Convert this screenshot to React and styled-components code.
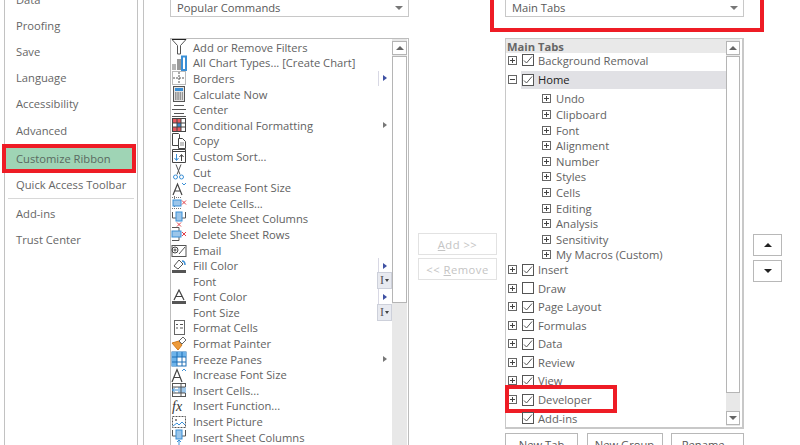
import React from 'react'
import styled, { createGlobalStyle } from 'styled-components'

const Global = createGlobalStyle`
html, body { margin: 0; padding: 0; background: #fff; }
body { font-family: "Open Sans", "Noto Sans", "Liberation Sans", sans-serif; }
`

const Svg = ({ children }) => (
  <svg width="16" height="16" viewBox="0 0 16 16" fill="none" strokeWidth="1">{children}</svg>
)

const G = '#555'
const B = '#3a8fd6'
const R = '#e0404a'

const commandIcons = {
  filter: <Svg><path d="M1 .5h14L9.5 6.5V15h-3V6.500z" stroke={G} /><path d="M1 .5h14" stroke="#222" /></Svg>,
  chart: <Svg><rect x="1" y="9" width="4" height="6" fill="#b5b5b5" /><rect x="6" y="4" width="4" height="11" fill="#9a9a9a" /><rect x="11" y="1.500" width="4" height="13.500" fill="#fff" stroke={B} strokeWidth="2" /></Svg>,
  borders: <Svg><rect x="1.500" y="1.500" width="13" height="13" stroke="#777" strokeDasharray="1 1" /><path d="M8 2v12M2 8h12" stroke="#555" strokeDasharray="2 1" /></Svg>,
  calc: <Svg><rect x="2.500" y=".5" width="11" height="15" fill="#e4e4e4" stroke="#555" /><rect x="4" y="2" width="8" height="3" fill={B} /><path d="M4 7h8M4 9h8M4 11h8M4 13h8" stroke="#444" strokeDasharray="1.500 .8" /></Svg>,
  center: <Svg><path d="M3 3.500h10M1 7.500h14M3 11.500h10M1 14.500h14" stroke="#555" /></Svg>,
  conditional: <Svg><rect x="1.500" y="1.500" width="13" height="13" stroke="#444" /><rect x="2" y="2" width="8" height="4" fill="#e85a60" /><rect x="6" y="6" width="4" height="4" fill={B} /><rect x="2" y="10" width="8" height="4" fill="#e85a60" /><path d="M6 2v12M10 2v12M2 6h12M2 10h12" stroke="#444" /></Svg>,
  copy: <Svg><path d="M1.500.5h6l1 1v11h-7z" fill="#fff" stroke="#444" /><path d="M7.500 5.500h4l3 3v7h-7z" fill="#fff" stroke="#444" /><path d="M9 10h4M9 12h4" stroke="#888" /></Svg>,
  sort: <Svg><path d="M1.500 1.500h13v13h-13zM1.500 3.500h13" stroke="#444" /><path d="M5.500 6v6M3.500 10l2 2.500 2-2.500" stroke={B} /><path d="M10.500 13V7M8.500 9l2-2.500 2 2.500" stroke="#444" /></Svg>,
  cut: <Svg><path d="M5 .5l4 10M10 .5L6 10.500" stroke="#555" /><circle cx="4.500" cy="13" r="2" stroke={B} /><circle cx="10.500" cy="13" r="2" stroke={B} /></Svg>,
  decrease: <Svg><path d="M2 15L6.500 4 11 15M3.800 11h5.400" stroke="#444" strokeWidth="1.200" /><path d="M11 3l2 2 2-2" stroke={B} /></Svg>,
  deleteCells: <Svg><path d="M1 2.500h10M1 13.500h10M3.500 1v14" stroke="#777" strokeDasharray="1 1" /><rect x="2" y="5" width="8" height="6" fill="#9cc6ea" stroke={B} /><path d="M11 5.500l4 4M15 5.500l-4 4" stroke={R} /></Svg>,
  deleteCols: <Svg><path d="M1.500 1v6h13V1M5.500 1v6M10.500 1v6" stroke="#555" /><rect x="5" y="1" width="6" height="9" fill="#9cc6ea" stroke={B} /><path d="M6 11.500l4 4M10 11.500l-4 4" stroke={R} /></Svg>,
  deleteRows: <Svg><path d="M1 1.500h7v13H1M1 5.500h7M1 10.500h7" stroke="#555" /><rect x="1" y="5" width="9" height="6" fill="#9cc6ea" stroke={B} /><path d="M11 6l4 4M15 6l-4 4" stroke={R} /></Svg>,
  email: <Svg><rect x="1" y="3.500" width="14" height="11" fill="#fff" stroke="#555" /><path d="M8 12l6-7" stroke="#555" /><circle cx="4" cy="8" r="3" stroke="#444" /><circle cx="4" cy="8" r="1" stroke="#444" /></Svg>,
  fill: <Svg><path d="M3 8l5-6 4 4-5 5z" fill="#fff" stroke="#555" /><path d="M11 3c2 0 3 2 3 4" stroke={B} strokeWidth="1.500" /><rect x="1" y="12" width="14" height="3" fill="#555" /></Svg>,
  fontColor: <Svg><path d="M3 11L8 1l5 10M5 7.500h6" stroke="#444" strokeWidth="1.200" /><rect x="1" y="12" width="14" height="3" fill="#555" /></Svg>,
  formatCells: <Svg><rect x="3.500" y=".5" width="10" height="14" fill="#fff" stroke="#666" /><path d="M5 4.500h2M9 4.500h3M5 8h2M9 8h3" stroke="#555" /></Svg>,
  painter: <Svg><path d="M1 7l6 7 4-5-3-4z" fill="#ee9b3a" stroke="#d07a1c" /><path d="M8 5l4-4 3 3-4 4z" fill="#fff" stroke="#666" /></Svg>,
  freeze: <Svg><rect x="1" y="1" width="14" height="14" fill="#fff" stroke="#1f6fb5" /><rect x="1" y="1" width="14" height="5" fill="#6db3ea" /><rect x="1" y="1" width="5" height="14" fill="#6db3ea" /><path d="M6 1v14M11 1v14M1 6h14M1 11h14" stroke="#1f6fb5" /></Svg>,
  increase: <Svg><path d="M1 15L6 2.500 11 15M3 10.500h6" stroke="#444" strokeWidth="1.200" /><path d="M11 4l2-2 2 2" stroke={B} /></Svg>,
  insertCells: <Svg><rect x="1.500" y="1.500" width="13" height="13" fill="#fff" stroke="#555" /><rect x="7" y="5" width="8" height="6" fill="#9cc6ea" /><path d="M1 8h6M4 5.500L1.500 8 4 10.500" stroke={B} /><path d="M2 5h12M2 11h12M10 2v12" stroke="#555" /></Svg>,
  fx: <Svg><text x="1" y="13" fontFamily="Liberation Serif" fontStyle="italic" fontSize="14" fill="#333">fx</text></Svg>,
  picture: <Svg><rect x="1.500" y="2.500" width="13" height="11" fill="#fff" stroke="#555" strokeDasharray="2 1" /><circle cx="5" cy="6" r="1" fill="#666" /><path d="M2 12l4-3 2 2 3-3 3 3" stroke={B} /></Svg>,
  insertCols: <Svg><path d="M1.500 1v6h13V1" stroke="#555" /><rect x="5" y="1" width="6" height="9" fill="#9cc6ea" stroke={B} /><path d="M8 11v5M6 13l2-2 2 2" stroke={B} /></Svg>,
}

const commands = [
  ['filter', 'Add or Remove Filters'],
  ['chart', 'All Chart Types... [Create Chart]'],
  ['borders', 'Borders', 'split'],
  ['calc', 'Calculate Now'],
  ['center', 'Center'],
  ['conditional', 'Conditional Formatting', 'sub'],
  ['copy', 'Copy'],
  ['sort', 'Custom Sort...'],
  ['cut', 'Cut'],
  ['decrease', 'Decrease Font Size'],
  ['deleteCells', 'Delete Cells...'],
  ['deleteCols', 'Delete Sheet Columns'],
  ['deleteRows', 'Delete Sheet Rows'],
  ['email', 'Email'],
  ['fill', 'Fill Color', 'split'],
  [null, 'Font', 'combo'],
  ['fontColor', 'Font Color', 'split'],
  [null, 'Font Size', 'combo'],
  ['formatCells', 'Format Cells'],
  ['painter', 'Format Painter'],
  ['freeze', 'Freeze Panes', 'sub'],
  ['increase', 'Increase Font Size'],
  ['insertCells', 'Insert Cells...'],
  ['fx', 'Insert Function...'],
  ['picture', 'Insert Picture'],
  ['insertCols', 'Insert Sheet Columns'],
]

const homeGroups = ['Undo', 'Clipboard', 'Font', 'Alignment', 'Number', 'Styles', 'Cells', 'Editing', 'Analysis', 'Sensitivity', 'My Macros (Custom)']
const afterHome = ['Insert', 'Draw', 'Page Layout', 'Formulas', 'Data', 'Review', 'View', 'Developer', 'Add-ins']

const Page = styled.div`
width: 800px;
height: 445px;
overflow: hidden;
display: flex;
align-items: stretch;
background: #fff;
font-size: 11.2px;
color: #626262;
`

const Sidebar = styled.nav`
width: 132px;
margin-left: 4px;
flex-shrink: 0;
border-left: 1px solid #c2c2c2;
border-right: 1px solid #c2c2c2;
display: flex;
flex-direction: column;
`

const SideList = styled.div`
margin-top: -14px;
display: flex;
flex-direction: column;
`

const SideItem = styled.div`
height: 26.2px;
display: flex;
align-items: center;
padding-left: 11px;
color: #666;
`

const SideItemActive = styled(SideItem)`
height: 29px;
margin-top: 0.8px;
margin-left: -3px;
margin-right: 1px;
padding-left: 10px;
box-sizing: border-box;
background: #9fd4b5;
border: 4px solid #ee1c25;
color: #5a6a61;
`

const SideQuick = styled(SideItem)`
height: 23.4px;
`

const SideRule = styled.div`
height: 1px;
margin: 2px 3px 1px 3px;
background: #d8d8d8;
`

const Main = styled.div`
margin-left: 5px;
width: 651px;
flex-shrink: 0;
border-left: 1px solid #c2c2c2;
border-right: 1px solid #c2c2c2;
padding-left: 26px;
display: flex;
`

const Column = styled.div`
width: 239px;
flex-shrink: 0;
display: flex;
flex-direction: column;
position: relative;
`

const Select = styled.div`
height: 19px;
flex-shrink: 0;
margin-top: -2px;
box-sizing: border-box;
border: 1px solid #c8c8c8;
display: flex;
align-items: center;
justify-content: space-between;
padding: 0 5px 0 6px;
color: #585858;
`

const Caret = styled.span`
width: 0;
height: 0;
border-left: 4px solid transparent;
border-right: 4px solid transparent;
border-top: 4px solid #777;
`

const TabsCallout = styled.div`
position: absolute;
left: -15px;
right: -20px;
top: -6px;
height: 38px;
box-sizing: border-box;
border: 4px solid #ee1c25;
`

const ListBox = styled.div`
margin-top: 21px;
height: 430px;
flex-shrink: 0;
box-sizing: border-box;
border: 1px solid #bdbdbd;
padding: 0 1px 1px 0;
display: flex;
`

const TreeBox = styled(ListBox)`
height: 391px;
padding: 0 1px 1px 0;
border-width: 1px 2px 2px 1px;
border-color: #c8c8c8;
`

const Rows = styled.div`
flex: 1;
min-width: 0;
display: flex;
flex-direction: column;
`

const CommandRows = styled(Rows)`
padding-top: 0.5px;
`

const CommandRow = styled.div`
height: 15.6px;
flex-shrink: 0;
display: flex;
align-items: center;
position: relative;
`

const IconSlot = styled.span`
width: 16px;
height: 16px;
flex-shrink: 0;
display: flex;
margin-right: 6px;
`

const Mark = styled.span`
position: absolute;
top: 0;
right: ${(p) => p.$right}px;
width: 13px;
height: 100%;
display: flex;
align-items: center;
justify-content: center;
`

const SubArrow = styled.span`
width: 0;
height: 0;
border-top: 3.5px solid transparent;
border-bottom: 3.5px solid transparent;
border-left: 4px solid ${(p) => p.$color};
`

const SplitMark = styled(Mark)`
border-left: 1px solid #d8d8e4;
box-sizing: border-box;
`

const ComboMark = styled(Mark)`
box-sizing: border-box;
width: 15px;
top: -1px;
height: 17px;
right: 0;
background: #e8eaf0;
border: 1px solid #cdd0da;
font-family: "Liberation Serif", serif;
font-size: 12px;
color: #555;
gap: 1px;
`

const MiniCaret = styled.span`
width: 0;
height: 0;
border-left: 2.5px solid transparent;
border-right: 2.5px solid transparent;
border-top: 3px solid #444;
`

const ScrollBar = styled.div`
width: 15px;
flex-shrink: 0;
display: flex;
flex-direction: column;
background: #e8e8e8;
box-sizing: border-box;
padding: 2px 0 1px;
`

const TreeScroll = styled(ScrollBar)`
width: 14px;
margin-right: 1px;
`

const ScrollBtn = styled.div`
height: 14px;
flex-shrink: 0;
box-sizing: border-box;
background: #fff;
border: 1px solid #b5b5b5;
display: flex;
align-items: center;
justify-content: center;
`

const ScrollThumb = styled.div`
height: ${(p) => p.$h}px;
flex-shrink: 0;
margin-top: 1px;
box-sizing: border-box;
background: #fff;
border: 1px solid #b5b5b5;
`

const ScrollGap = styled.div`
flex: 1;
`

const UpTri = styled.span`
width: 0;
height: 0;
border-left: 4px solid transparent;
border-right: 4px solid transparent;
border-bottom: 4px solid ${(p) => p.$color || '#666'};
`

const DownTri = styled.span`
width: 0;
height: 0;
border-left: 4px solid transparent;
border-right: 4px solid transparent;
border-top: 4px solid ${(p) => p.$color || '#666'};
`

const MiddleCol = styled.div`
width: 79px;
margin: 233px 8px 0 9px;
flex-shrink: 0;
display: flex;
flex-direction: column;
gap: 3px;
`

const GhostButton = styled.div`
height: 22px;
box-sizing: border-box;
border: 1px solid #e2e2e2;
display: flex;
align-items: center;
justify-content: center;
color: #c4c4c4;
letter-spacing: 0.5px;
u { text-decoration: underline; }
`

const TreeHeader = styled.div`
height: 14px;
flex-shrink: 0;
background: #e9e9e9;
padding-left: 1px;
font-weight: 700;
line-height: 15px;
color: #666;
`

const TreeRow = styled.div`
height: 18.55px;
flex-shrink: 0;
display: flex;
align-items: center;
position: relative;
padding-left: 2px;
`

const FirstTreeRow = styled(TreeRow)`
margin-top: -2px;
`

const Expander = styled.span`
width: 9px;
height: 9px;
flex-shrink: 0;
box-sizing: border-box;
border: 1px solid #666;
margin-right: 5px;
position: relative;
visibility: ${(p) => (p.$hidden ? 'hidden' : 'visible')};
&::before {
  content: "";
  position: absolute;
  left: 1px;
  right: 1px;
  top: 3px;
  height: 1px;
  background: #444;
}
&::after {
  content: ${(p) => (p.$open ? 'none' : '""')};
  position: absolute;
  top: 1px;
  bottom: 1px;
  left: 3px;
  width: 1px;
  background: #444;
}
`

const CheckBox = styled.span`
width: 12px;
height: 12px;
flex-shrink: 0;
box-sizing: border-box;
border: 1px solid #555;
margin-right: 4px;
display: flex;
background: #fff;
`

const HomeLabel = styled.span`
flex: 1;
align-self: stretch;
display: flex;
align-items: center;
color: #222;
`

const HomeRow = styled(TreeRow)`
margin-top: 1px;
&::before {
  content: "";
  position: absolute;
  left: 15px;
  right: 0;
  top: 0;
  bottom: 0;
  background: #e1e1e5;
}
> * { position: relative; }
`

const SubGroup = styled.div`
margin: 2px 0 -2.2px 0;
display: flex;
flex-direction: column;
`

const SubRow = styled.div`
height: 15.6px;
display: flex;
align-items: center;
padding-left: 36px;
`

const DeveloperCallout = styled.div`
position: absolute;
left: -1px;
top: -5px;
width: 112px;
height: 28px;
box-sizing: border-box;
border: 4px solid #ee1c25;
`

const TreeButtons = styled.div`
margin-top: 4px;
display: flex;
justify-content: space-between;
flex-shrink: 0;
`

const TreeButton = styled.div`
width: ${(p) => p.$w}px;
height: 24px;
box-sizing: border-box;
border: 1px solid #b8b8b8;
text-align: center;
line-height: 21px;
color: #555;
flex-shrink: 0;
`

const MoveCol = styled.div`
width: 29px;
margin: 234px 0 0 9px;
flex-shrink: 0;
display: flex;
flex-direction: column;
gap: 4px;
`

const MoveButton = styled.div`
height: 22px;
box-sizing: border-box;
border: 1px solid #b8b8b8;
display: flex;
align-items: center;
justify-content: center;
`

const Check = () => (
  <svg width="10" height="10" viewBox="0 0 10 10" fill="none">
    <path d="M1 5.500l2.500 2.500L9 1.500" stroke="#555" strokeWidth="1" />
  </svg>
)

const Marker = ({ kind }) => {
  if (kind === 'split') return <SplitMark $right={1}><SubArrow $color="#3f51a3" /></SplitMark>
  if (kind === 'sub') return <Mark $right={1}><SubArrow $color="#777" /></Mark>
  if (kind === 'combo') return <ComboMark $right={0}>I<MiniCaret /></ComboMark>
  return null
}

const MainTab = ({ name }) => (
  <TreeRow>
    <Expander $hidden={name === 'Add-ins'} />
    <CheckBox>{name !== 'Draw' && <Check />}</CheckBox>
    {name}
    {name === 'Developer' && <DeveloperCallout />}
  </TreeRow>
)

const App = () => {
  return (
    <Page>
      <Global />
      <Sidebar>
        <SideList>
          {['Data', 'Proofing', 'Save', 'Language', 'Accessibility', 'Advanced'].map((s) => <SideItem key={s}>{s}</SideItem>)}
          <SideItemActive>Customize Ribbon</SideItemActive>
          <SideQuick>Quick Access Toolbar</SideQuick>
          <SideRule />
          <SideItem>Add-ins</SideItem>
          <SideItem>Trust Center</SideItem>
        </SideList>
      </Sidebar>
      <Main>
        <Column>
          <Select>Popular Commands<Caret /></Select>
          <ListBox>
            <CommandRows>
              {commands.map(([icon, label, mark]) => (
                <CommandRow key={label}>
                  <IconSlot>{icon && commandIcons[icon]}</IconSlot>
                  {label}
                  <Marker kind={mark} />
                </CommandRow>
              ))}
            </CommandRows>
            <ScrollBar>
              <ScrollBtn><UpTri /></ScrollBtn>
              <ScrollThumb $h={247} />
            </ScrollBar>
          </ListBox>
        </Column>
        <MiddleCol>
          <GhostButton><span><u>A</u>dd &gt;&gt;</span></GhostButton>
          <GhostButton><span>&lt;&lt; <u>R</u>emove</span></GhostButton>
        </MiddleCol>
        <Column>
          <Select>Main Tabs<Caret /></Select>
          <TabsCallout />
          <TreeBox>
            <Rows>
              <TreeHeader>Main Tabs</TreeHeader>
              <FirstTreeRow><Expander /><CheckBox><Check /></CheckBox>Background Removal</FirstTreeRow>
              <HomeRow><Expander $open /><CheckBox><Check /></CheckBox><HomeLabel>Home</HomeLabel></HomeRow>
              <SubGroup>
                {homeGroups.map((g) => <SubRow key={g}><Expander />{g}</SubRow>)}
              </SubGroup>
              {afterHome.map((t) => <MainTab key={t} name={t} />)}
            </Rows>
            <TreeScroll>
              <ScrollBtn><UpTri /></ScrollBtn>
              <ScrollThumb $h={337} />
              <ScrollGap />
              <ScrollBtn><DownTri /></ScrollBtn>
            </TreeScroll>
          </TreeBox>
          <TreeButtons>
            <TreeButton $w={73}>New Tab</TreeButton>
            <TreeButton $w={76}>New Group</TreeButton>
            <TreeButton $w={73}>Rename...</TreeButton>
          </TreeButtons>
        </Column>
        <MoveCol>
          <MoveButton><UpTri $color="#222" /></MoveButton>
          <MoveButton><DownTri $color="#222" /></MoveButton>
        </MoveCol>
      </Main>
    </Page>
  )
}

export default App
